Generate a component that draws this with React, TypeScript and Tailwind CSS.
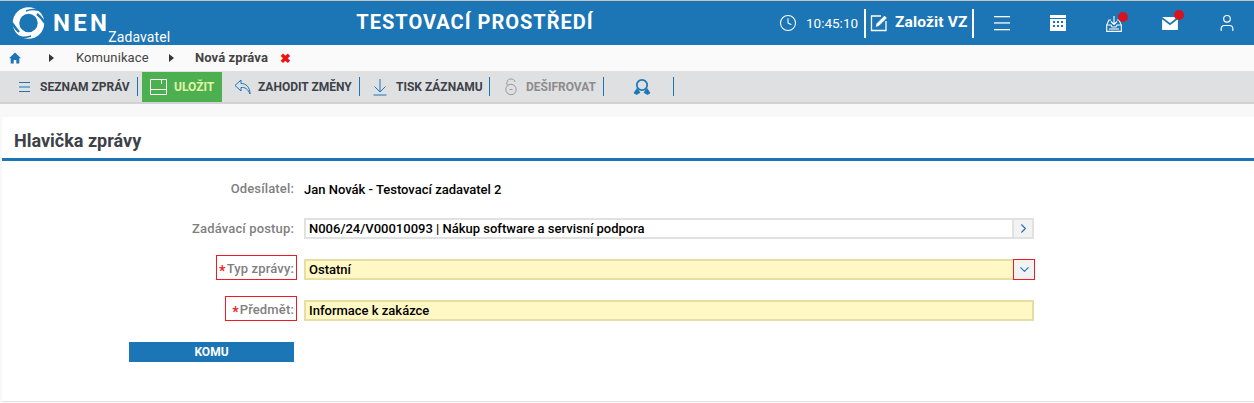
import { ChevronDown, ChevronRight, Clock, User } from "lucide-react"

function Logo() {
  return (
    <svg width="34" height="34" viewBox="0 0 34 34" className="shrink-0">
      <circle cx="17.5" cy="17" r="12.5" fill="none" stroke="#fff" strokeWidth="6.5" />
      <path d="M33 7C27 3 20 3 15 5" fill="none" stroke="#1c75b4" strokeWidth="1.6" />
      <path d="M26 8C30 11 32 14 34 17" fill="none" stroke="#1c75b4" strokeWidth="2.4" />
      <path d="M1 25C5 31 13 33 20 30" fill="none" stroke="#1c75b4" strokeWidth="1.6" />
      <path d="M8 26C5 23 3 20 1 17" fill="none" stroke="#1c75b4" strokeWidth="2.4" />
    </svg>
  )
}

function Dot({ className }: { className: string }) {
  return <span className={`absolute w-[10px] h-[10px] rounded-full bg-[#d9121f] ${className}`} />
}

function Sep({ className }: { className: string }) {
  return <span className={`w-px h-[19px] bg-[#1c75b4] shrink-0 ${className}`} />
}

function Header() {
  return (
    <header className="h-[45px] border-t border-[#c4c4c4] bg-[#1c75b4] text-white flex items-center relative">
      <div className="w-[332px] shrink-0 flex items-center pl-[11px]">
        <Logo />
        <div className="ml-[8px] mt-[-1px] text-[24px] leading-none font-bold tracking-[3.3px]">NEN</div>
        <div className="self-end text-[14px] leading-[15px] ml-[-2px] mb-[-5px] tracking-[0.1px]">Zadavatel</div>
      </div>
      <div className="w-[286px] shrink-0 text-center text-[20px] font-bold tracking-[1px] mt-[-2px]">TESTOVACÍ PROSTŘEDÍ</div>
      <div className="ml-[161px] flex items-center h-full">
        <Clock size={18} strokeWidth={1.4} />
        <span className="ml-[9px] w-[51px] text-[13.5px]">10:45:10</span>
        <span className="ml-[7px] w-[2px] h-[29px] bg-white" />
        <svg width="18" height="18" viewBox="0 0 18 18" className="ml-[4px]" fill="none" stroke="#fff" strokeWidth="1.3">
          <path d="M11 2H1.5V16.5H16V7" />
          <path d="M6 12.5L7 9.5L14.5 2L16.5 4L9 11.5Z" fill="#fff" strokeWidth="0.5" />
        </svg>
        <span className="ml-[7px] text-[15.5px] font-bold tracking-[0.15px] w-[73px] whitespace-nowrap">Založit VZ</span>
        <span className="ml-[4px] w-[2px] h-[29px] bg-white" />
        <svg width="16" height="16" viewBox="0 0 16 16" className="ml-[20px]" fill="#fff">
          <rect y="1" width="16" height="1.3" />
          <rect y="7.3" width="16" height="1.3" />
          <rect y="14" width="16" height="1.3" />
        </svg>
        <svg width="16" height="16" viewBox="0 0 16 16" className="ml-[40px]" fill="#fff">
          <path d="M0 0H16V16H0ZM3 6V8H5V6ZM7 6V8H9V6ZM11 6V8H13V6ZM3 10V12H5V10ZM7 10V12H9V10ZM11 10V12H13V10Z" fillRule="evenodd" />
          <rect y="3" width="16" height="1" fill="#1c75b4" />
        </svg>
        <div className="relative ml-[40px] mt-[1px]">
          <svg width="16" height="16" viewBox="0 0 16 16" fill="none" stroke="#fff" strokeWidth="1.1" className="block">
            <path d="M5 4H3L0.7 9V15.4H15.3V9L13 4H11" />
            <path d="M0.7 9H5L6 11H10L11 9H15.3" />
            <path d="M8 0V8M5 5.5L8 8.5L11 5.5" />
            <path d="M3 13H13" />
          </svg>
          <Dot className="left-[12px] top-[-4px]" />
        </div>
        <div className="relative ml-[40px] mt-[1px]">
          <svg width="16" height="13" viewBox="0 0 17 14" fill="#fff" className="block">
            <path d="M0 0H17L8.5 6.5ZM0 2.5L8.5 9L17 2.5V14H0Z" />
          </svg>
          <Dot className="left-[12px] top-[-7px]" />
        </div>
        <User size={20} strokeWidth={1.4} className="ml-[39px]" />
      </div>
    </header>
  )
}

function Breadcrumb() {
  return (
    <div className="h-[26px] bg-[#fafafa] flex items-center text-[13px] tracking-[0.1px] text-[#444]">
      <svg width="12" height="12" viewBox="0 0 12 12" fill="#1c75b4" className="ml-[9px]">
        <path d="M6 0.5L12 6.2H10.3V11.5H7.3V8H4.7V11.5H1.7V6.2H0Z" />
      </svg>
      <span className="ml-[28px] border-y-[4px] border-l-[5px] border-y-transparent border-l-[#333]" />
      <span className="ml-[22px] w-[72px] whitespace-nowrap">Komunikace</span>
      <span className="ml-[21px] border-y-[4px] border-l-[5px] border-y-transparent border-l-[#333]" />
      <span className="ml-[21px] w-[73px] font-bold whitespace-nowrap">Nová zpráva</span>
      <span className="ml-[12px] text-[#ee1111] text-[13px] font-bold leading-none">✖</span>
    </div>
  )
}

function ToolLabel({ children, muted, className }: { children: string; muted?: boolean; className: string }) {
  return <span className={`text-[12px] font-bold whitespace-nowrap ${muted ? "text-[#8c8c8c]" : "text-[#3d4148]"} ${className}`}>{children}</span>
}

function Toolbar() {
  return (
    <div className="h-[33px] bg-[#dfe0e2] border-b-2 border-[#d2d2d2] flex items-center">
      <svg width="11" height="10" viewBox="0 0 11 10" fill="#1c75b4" className="ml-[19px]">
        <rect width="11" height="1" />
        <rect y="4.5" width="11" height="1" />
        <rect y="9" width="11" height="1" />
      </svg>
      <ToolLabel className="ml-[10px] w-[90px]">SEZNAM ZPRÁV</ToolLabel>
      <Sep className="ml-[7px]" />
      <div className="ml-[4px] w-[80px] h-[30px] bg-[#4caf50] flex items-center shrink-0">
        <svg width="17" height="16" viewBox="0 0 17 16" fill="none" stroke="#fff" strokeWidth="1" className="ml-[8px]">
          <path d="M0.5 0.5H16.5V15.5H0.5Z" />
          <path d="M0.5 10.5H16.5" />
          <path d="M11.5 1V5" />
        </svg>
        <span className="ml-[7px] text-[12px] font-bold text-[#e4f5a8]">ULOŽIT</span>
      </div>
      <svg width="17" height="16" viewBox="0 0 17 16" fill="none" stroke="#1c75b4" strokeWidth="1" className="ml-[12px]">
        <path d="M7 1L1 6.5L7 12V8.5C11 8 14 10 16 15C16 8 12 4.5 7 4.5Z" />
      </svg>
      <ToolLabel className="ml-[7px] w-[94px]">ZAHODIT ZMĚNY</ToolLabel>
      <Sep className="ml-[7px]" />
      <svg width="14" height="18" viewBox="0 0 14 18" fill="none" stroke="#1c75b4" strokeWidth="1" className="ml-[13px]">
        <path d="M7 1V14M1.5 8.5L7 14L12.5 8.5" />
        <path d="M0.5 17H13.5" />
      </svg>
      <ToolLabel className="ml-[9px] w-[86px]">TISK ZÁZNAMU</ToolLabel>
      <Sep className="ml-[7px]" />
      <svg width="12" height="18" viewBox="0 0 12 18" fill="none" stroke="#999" strokeWidth="1" className="ml-[15px]">
        <circle cx="6" cy="11.5" r="5.2" />
        <path d="M2 7.5V4.5C2 2 4 1 6 1C8 1 10 2 10 4M4.5 11.5H7.5" />
      </svg>
      <ToolLabel muted className="ml-[9px] w-[70px]">DEŠIFROVAT</ToolLabel>
      <Sep className="ml-[7px]" />
      <svg width="18" height="18" viewBox="0 0 18 18" fill="none" stroke="#1c75b4" strokeWidth="1.7" className="ml-[29px]">
        <circle cx="9" cy="7" r="5.2" />
        <path d="M1 15L4 10.5L7 14.5L3.5 16.5Z" fill="#1c75b4" strokeWidth="0.8" />
        <path d="M17 15L14 10.5L11 14.5L14.5 16.5Z" fill="#1c75b4" strokeWidth="0.8" />
      </svg>
      <Sep className="ml-[22px]" />
    </div>
  )
}

function Row({ label, required, boxClass, children, className }: { label: string; required?: boolean; boxClass?: string; children: React.ReactNode; className: string }) {
  return (
    <div className={`flex items-center ${className}`}>
      <div className="w-[295px] shrink-0 flex justify-end">
        <div className={`flex items-center justify-end text-[13px] font-medium text-[#7f7f7f] tracking-[0.15px] whitespace-nowrap ${boxClass ? `h-[25px] mb-[4px] pt-[3px] border border-[#ed1c24] pr-[2px] ${boxClass}` : "pr-[3px]"}`}>
          {required && <span className="text-[#ed1c24] font-bold text-[14px] leading-none mt-[4px] mr-[1px]">*</span>}
          {label}:
        </div>
      </div>
      <div className="ml-[7px] flex-1 min-w-0">{children}</div>
    </div>
  )
}

function Field({ value, yellow, btn }: { value: string; yellow?: boolean; btn?: React.ReactNode }) {
  return (
    <div className={`w-[730px] h-[21px] flex border-2 ${yellow ? "bg-[#fff8c4] border-[#e5dfa6]" : "bg-white border-[#e1e1e1]"} text-[13px] font-medium text-black items-center relative`}>
      <span className="pl-[3px] whitespace-nowrap flex-1">{value}</span>
      {btn}
    </div>
  )
}

export default function App() {
  return (
    <div className="w-[1254px] h-[403px] overflow-hidden bg-[#f8f8f8] font-['Roboto',sans-serif]">
      <Header />
      <Breadcrumb />
      <Toolbar />
      <main className="mt-[13px] ml-[2px] h-[285px] bg-white border-b border-[#e4e4e4]">
        <div className="h-[44px] border-b-[3px] border-[#1c75b4] flex items-center pl-[12px] pt-[5px]">
          <h1 className="text-[18px] font-bold text-[#3d4148]">Hlavička zprávy</h1>
        </div>
        <Row label="Odesílatel" className="mt-[18px] h-[20px]">
          <span className="text-[13px] font-medium text-black">Jan Novák - Testovací zadavatel 2</span>
        </Row>
        <Row label="Zadávací postup" className="mt-[19px] h-[21px]">
          <Field
            value="N006/24/V00010093 | Nákup software a servisní podpora"
            btn={
              <span className="w-[20px] h-full bg-[#f2f2f2] border-l-2 border-[#e1e1e1] flex items-center justify-center shrink-0">
                <ChevronRight size={15} strokeWidth={1.7} color="#1c75b4" />
              </span>
            }
          />
        </Row>
        <Row label="Typ zprávy" required boxClass="pl-[2px]" className="mt-[18px] h-[25px]">
          <Field
            value="Ostatní"
            yellow
            btn={
              <span className="absolute right-[-3px] top-[-2px] w-[22px] h-[21px] bg-[#f2f2f2] border border-[#ed1c24] flex items-center justify-center">
                <ChevronDown size={15} strokeWidth={1.7} color="#1c75b4" />
              </span>
            }
          />
        </Row>
        <Row label="Předmět" required boxClass="pl-[6px]" className="mt-[16px] h-[25px]">
          <Field value="Informace k zakázce" yellow />
        </Row>
        <div className="mt-[19px] ml-[127px] w-[165px] h-[20px] bg-[#1c75b4] text-white text-[12px] font-bold flex items-center justify-center">KOMU</div>
      </main>
    </div>
  )
}
